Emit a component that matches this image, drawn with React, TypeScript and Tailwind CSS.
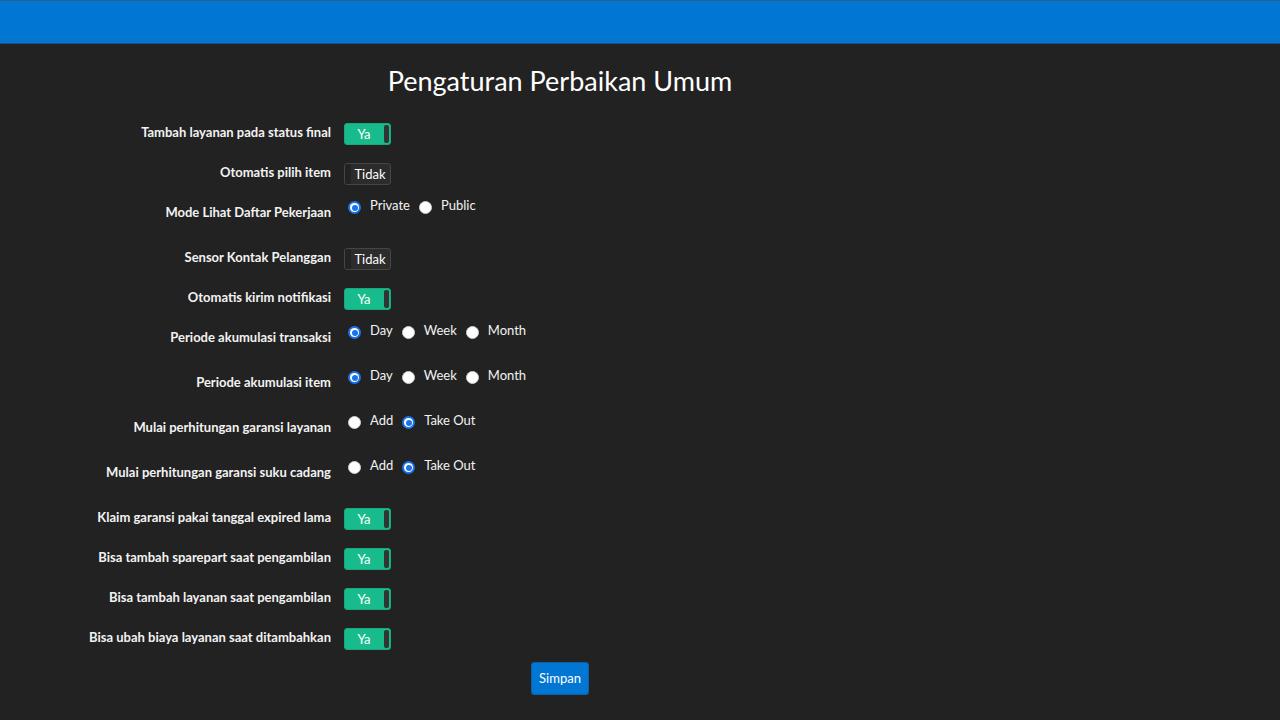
import React from "react";

type Row =
  | { label: string; type: "toggle"; on: boolean }
  | { label: string; type: "radio"; options: string[]; checked: number };

const rows: Row[] = [
  { label: "Tambah layanan pada status final", type: "toggle", on: true },
  { label: "Otomatis pilih item", type: "toggle", on: false },
  { label: "Mode Lihat Daftar Pekerjaan", type: "radio", options: ["Private", "Public"], checked: 0 },
  { label: "Sensor Kontak Pelanggan", type: "toggle", on: false },
  { label: "Otomatis kirim notifikasi", type: "toggle", on: true },
  { label: "Periode akumulasi transaksi", type: "radio", options: ["Day", "Week", "Month"], checked: 0 },
  { label: "Periode akumulasi item", type: "radio", options: ["Day", "Week", "Month"], checked: 0 },
  { label: "Mulai perhitungan garansi layanan", type: "radio", options: ["Add", "Take Out"], checked: 1 },
  { label: "Mulai perhitungan garansi suku cadang", type: "radio", options: ["Add", "Take Out"], checked: 1 },
  { label: "Klaim garansi pakai tanggal expired lama", type: "toggle", on: true },
  { label: "Bisa tambah sparepart saat pengambilan", type: "toggle", on: true },
  { label: "Bisa tambah layanan saat pengambilan", type: "toggle", on: true },
  { label: "Bisa ubah biaya layanan saat ditambahkan", type: "toggle", on: true },
];

function Toggle({ on }: { on: boolean }) {
  if (on) {
    return (
      <div className="mt-[9px] flex h-[22px] w-[47px] items-center rounded-[3px] border border-[#15a97d] bg-[#18bc8c] pr-[1px]">
        <span className="flex-1 pt-[1px] pr-[1px] text-center text-[13px] leading-none text-white">Ya</span>
        <span className="h-[18px] w-[5px] rounded-[2px] bg-[#333333]" />
      </div>
    );
  }
  return (
    <div className="mt-[9px] flex h-[22px] w-[47px] items-center rounded-[3px] border border-[#454545] bg-[#2c2c2c]">
      <span className="h-full w-[6px] rounded-l-[2px] bg-[#232323]" />
      <span className="flex-1 pt-[1px] pr-[1px] text-center text-[13px] leading-none text-white">Tidak</span>
    </div>
  );
}

function Radio({ checked }: { checked: boolean }) {
  if (checked) {
    return (
      <span className="mt-[7px] flex size-[13px] shrink-0 items-center justify-center rounded-full bg-[#1a73e8]">
        <span className="flex size-[9px] items-center justify-center rounded-full bg-white">
          <span className="size-[6px] rounded-full bg-[#1a73e8]" />
        </span>
      </span>
    );
  }
  return <span className="mt-[7px] block size-[13px] shrink-0 rounded-full border border-[#d0d0d0] bg-white" />;
}

export default function App() {
  return (
    <div className="min-h-[720px] bg-[#222222] font-['Lato','Noto_Sans',sans-serif] text-white">
      <div className="h-[44px] border-t border-t-[#2e5f8f] border-b border-b-[#1d4f80] bg-[#0177d3]" />
      <div className="w-[1120px]">
        <h1 className="mt-[20px] text-center text-[27px] leading-[34px] text-white">
          Pengaturan Perbaikan Umum
        </h1>
        <div className="mt-[16px] flex flex-col">
          {rows.map((row) => (
            <div
              key={row.label}
              className={`grid grid-cols-[331px_1fr] gap-x-[13px] ${row.type === "toggle" ? "h-[40px]" : "h-[45px]"}`}
            >
              <div className="pt-[9px] text-right text-[13px] font-bold leading-[18px] text-[#f2f2f2]">
                {row.label}
              </div>
              {row.type === "toggle" ? (
                <div>
                  <Toggle on={row.on} />
                </div>
              ) : (
                <div className="flex items-start">
                  {row.options.map((opt, i) => (
                    <div key={opt} className="mr-[5px] flex items-start">
                      <span className="ml-[4px] block">
                        <Radio checked={i === row.checked} />
                      </span>
                      <span className="ml-[9px] pt-[2px] text-[13px] leading-[18px] text-[#f2f2f2]">
                        {opt}
                      </span>
                    </div>
                  ))}
                </div>
              )}
            </div>
          ))}
        </div>
        <div className="mt-[3px] flex justify-center">
          <button className="h-[33px] w-[58px] rounded-[3px] border border-[#0f5ea8] bg-[#0177d3] text-[13px] text-white">
            Simpan
          </button>
        </div>
      </div>
    </div>
  );
}
